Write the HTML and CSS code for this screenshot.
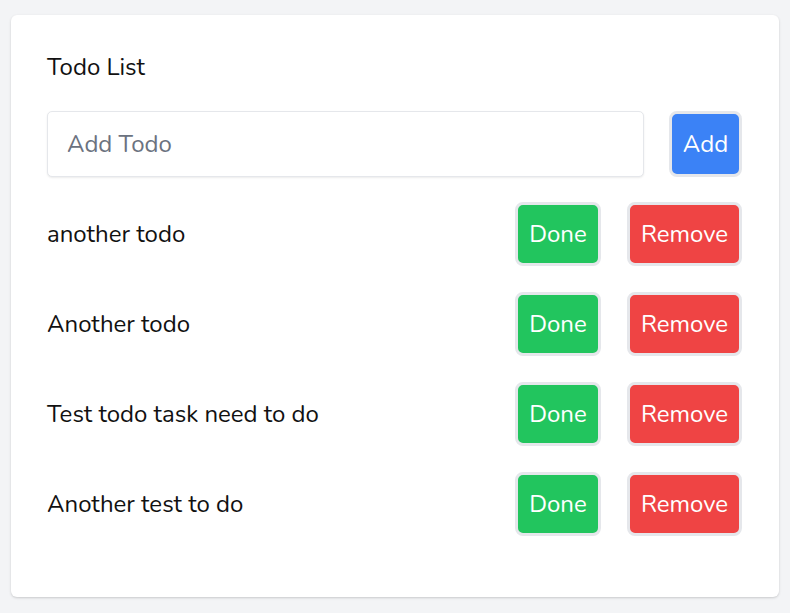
FILE: index.html
```html
<!DOCTYPE html>
<html>
<head>
<meta charset="utf-8">
<link rel="stylesheet" href="styles.css">
</head>
<body>
<div class="card">
  <h1 class="title">Todo List</h1>
  <div class="add-row">
    <input class="todo-input" type="text" placeholder="Add Todo">
    <button class="btn btn-add">Add</button>
  </div>
  <ul class="list">
    <li class="item"><span class="item-text">another todo</span><button class="btn btn-done">Done</button><button class="btn btn-remove">Remove</button></li>
    <li class="item"><span class="item-text">Another todo</span><button class="btn btn-done">Done</button><button class="btn btn-remove">Remove</button></li>
    <li class="item"><span class="item-text">Test todo task need to do</span><button class="btn btn-done">Done</button><button class="btn btn-remove">Remove</button></li>
    <li class="item"><span class="item-text">Another test to do</span><button class="btn btn-done">Done</button><button class="btn btn-remove">Remove</button></li>
  </ul>
</div>
</body>
</html>
```

FILE: styles.css
```css
* { box-sizing: border-box; }
html, body { margin: 0; }
body {
  background: #f3f4f6;
  padding: 15px 11px 16px 11px;
  font-family: "Nunito", "Open Sans", sans-serif;
  color: #111;
}
.card {
  background: #fff;
  border-radius: 6px;
  box-shadow: 0 1px 3px rgba(0,0,0,0.12), 0 1px 2px rgba(0,0,0,0.06);
  padding: 36px 37px 61px 36px;
}
.title {
  margin: 0 0 28px 0;
  font-size: 24px;
  line-height: 32px;
  font-weight: 400;
}
.add-row {
  display: flex;
  gap: 25px;
}
.todo-input {
  flex: 1;
  height: 66px;
  border: 1px solid #e5e7eb;
  border-radius: 5px;
  box-shadow: 0 1px 2px rgba(0,0,0,0.08);
  padding: 0 19px;
  font-family: inherit;
  font-size: 24px;
  color: #111;
  outline: none;
}
.todo-input::placeholder { color: #6b7280; }
.btn {
  border: 3px solid #e5e7eb;
  border-radius: 8px;
  color: #fff;
  font-family: inherit;
  font-size: 24px;
  padding: 0;
  cursor: pointer;
}
.btn-add { flex: 0 0 73px; height: 66px; background: #3b82f6; }
.list {
  list-style: none;
  margin: 25px 0 0 0;
  padding: 0;
  display: flex;
  flex-direction: column;
  gap: 26px;
}
.item {
  display: flex;
  align-items: center;
  gap: 26px;
  height: 64px;
}
.item-text { flex: 1; font-size: 24px; }
.btn-done { flex: 0 0 86px; height: 64px; background: #22c55e; }
.btn-remove { flex: 0 0 115px; height: 64px; background: #ef4444; }
```
